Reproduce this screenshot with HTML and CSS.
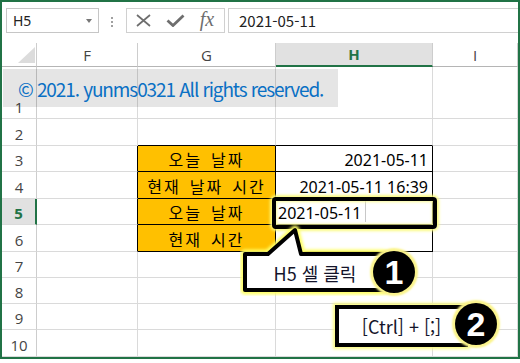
FILE: index.html
```html
<!DOCTYPE html>
<html lang="ko">
<head>
    <meta charset="UTF-8">
    <meta name="viewport" content="width=device-width, initial-scale=1.0">
    <title>오늘 날짜 입력</title>
    <link rel="stylesheet" href="styles.css">
</head>
<body>
    <div class="screen">
        <div class="window">
            <div class="formula-bar">
                <div class="name-box"><span>H5</span><i class="caret"></i></div>
                <div class="grip"><i></i><i></i><i></i></div>
                <div class="fx-buttons">
                    <span class="fx-slot">
                        <svg width="15" height="13" viewBox="0 0 15 13"><path d="M1 1L14 12M14 1L1 12" stroke="#6e6e6e" stroke-width="1.7" fill="none"/></svg>
                    </span>
                    <span class="fx-slot">
                        <svg width="19" height="13" viewBox="0 0 19 13"><path d="M1.5 6.5L7 11.5L17.5 1.5" stroke="#6e6e6e" stroke-width="2.8" fill="none"/></svg>
                    </span>
                    <span class="fx-slot fx">fx</span>
                </div>
                <div class="formula-input">2021-05-11</div>
            </div>

            <div class="sheet">
                <div class="ch corner"><svg width="17" height="16" viewBox="0 0 17 16"><path d="M17 0V16H0Z" fill="#dcdcdc"/></svg></div>
                <div class="ch">F</div>
                <div class="ch">G</div>
                <div class="ch sel">H</div>
                <div class="ch">I</div>

                <div class="rh">1</div>
                <div class="c"></div><div class="c"></div><div class="c"></div><div class="c"></div>

                <div class="rh">2</div>
                <div class="c"></div><div class="c top-edge"></div><div class="c top-edge"></div><div class="c"></div>

                <div class="rh">3</div>
                <div class="c left-edge"></div>
                <div class="c lbl">오늘 날짜</div>
                <div class="c val">2021-05-11</div>
                <div class="c"></div>

                <div class="rh">4</div>
                <div class="c left-edge"></div>
                <div class="c lbl">현재 날짜 시간</div>
                <div class="c val">2021-05-11 16:39</div>
                <div class="c"></div>

                <div class="rh sel">5</div>
                <div class="c left-edge"></div>
                <div class="c lbl">오늘 날짜</div>
                <div class="c val edit">2021-05-11<span class="cursor"></span></div>
                <div class="c"></div>

                <div class="rh">6</div>
                <div class="c left-edge"></div>
                <div class="c lbl">현재 시간</div>
                <div class="c val"></div>
                <div class="c"></div>

                <div class="rh">7</div>
                <div class="c"></div><div class="c"></div><div class="c"></div><div class="c"></div>

                <div class="rh">8</div>
                <div class="c"></div><div class="c"></div><div class="c"></div><div class="c"></div>

                <div class="rh">9</div>
                <div class="c"></div><div class="c"></div><div class="c"></div><div class="c"></div>

                <div class="rh">10</div>
                <div class="c"></div><div class="c"></div><div class="c"></div><div class="c"></div>
            </div>
        </div>

        <!-- overlays -->
        <div class="banner">© 2021. yunms0321 All rights reserved.</div>
        <div class="focus-box"></div>

        <div class="callout callout-1">
            <svg class="callout-shape" width="150" height="74" viewBox="0 0 150 74">
                <defs>
                    <filter id="glow" x="-20%" y="-20%" width="140%" height="140%">
                        <feGaussianBlur stdDeviation="1.4"/>
                    </filter>
                </defs>
                <path d="M5 32H28L55 8L61 32H143V68H5Z" fill="none" stroke="#ffff66" stroke-width="9" stroke-linejoin="round" filter="url(#glow)"/>
                <path d="M5 32H28L55 8L61 32H143V68H5Z" fill="#fff" stroke="#000" stroke-width="4" stroke-linejoin="round"/>
            </svg>
            <span class="callout-text">H5 셀 클릭</span>
        </div>
        <div class="badge badge-1">1</div>

        <div class="callout callout-2"><span class="callout-text">[Ctrl] + [;]</span></div>
        <div class="badge badge-2">2</div>
    </div>
</body>
</html>
```

FILE: styles.css
```css
body {
    margin: 0;
    background-color: #fff;
    font-family: "Noto Sans", "Noto Sans CJK KR", sans-serif;
}
.screen {
    position: relative;
    width: 520px;
    height: 363px;
    overflow: hidden;
}
.window {
    width: 520px;
    height: 359px;
    box-sizing: border-box;
    border: 2px solid #217346;
    display: flex;
    flex-direction: column;
    background-color: #fff;
}

/* formula bar */
.formula-bar {
    height: 41px;
    flex-shrink: 0;
    box-sizing: border-box;
    padding: 6px 0 0 4px;
    display: flex;
    align-items: flex-start;
}
.name-box {
    width: 93px;
    height: 25px;
    box-sizing: border-box;
    border: 1px solid #c6c6c6;
    padding: 0 6px;
    display: flex;
    align-items: center;
    justify-content: space-between;
    font-size: 14px;
    color: #222;
}
.caret {
    width: 0;
    height: 0;
    border-left: 3.5px solid transparent;
    border-right: 3.5px solid transparent;
    border-top: 4px solid #777;
}
.grip {
    width: 3px;
    margin: 9px 12px 0 12px;
    display: flex;
    flex-direction: column;
    gap: 2px;
}
.grip i {
    width: 2px;
    height: 2px;
    background-color: #a0a0a0;
}
.fx-buttons {
    width: 99px;
    height: 25px;
    box-sizing: border-box;
    border: 1px solid #d0d0d0;
    display: flex;
}
.fx-slot {
    width: 32px;
    display: flex;
    align-items: center;
    justify-content: center;
}
.fx {
    font-family: "Liberation Serif", serif;
    font-style: italic;
    font-size: 20px;
    color: #6e6e6e;
    padding-bottom: 2px;
}
.formula-input {
    flex: 1;
    height: 25px;
    margin-left: 3px;
    box-sizing: border-box;
    border: 1px solid #d0d0d0;
    border-right: none;
    padding-left: 10px;
    display: flex;
    align-items: center;
    font-family: "Noto Sans CJK KR", sans-serif;
    font-size: 15px;
    color: #222;
}

/* sheet grid */
.sheet {
    flex: 1;
    display: grid;
    grid-template-columns: 35px 101px 138px 157px 1fr;
    grid-template-rows: 24px 52px 27px 26px 27px 26px 27px 26px 26px 26px 27px;
}
.c, .ch, .rh {
    box-sizing: border-box;
    border-right: 1px solid #dadada;
    border-bottom: 1px solid #dadada;
    display: flex;
    min-width: 0;
    white-space: nowrap;
}
.c {
    align-items: flex-end;
    padding: 0 4px 2px;
    font-size: 16px;
    line-height: 18px;
    color: #000;
}
.ch {
    align-items: center;
    justify-content: center;
    font-family: "Open Sans", sans-serif;
    font-size: 15px;
    color: #444;
    border-right-color: #cdcdcd;
    border-bottom-color: #b5b5b5;
}
.ch.corner {
    align-items: flex-end;
    justify-content: flex-end;
    padding: 0 1px 3px 0;
}
.ch.sel {
    background-color: #e1e1e1;
    color: #217346;
    font-weight: 700;
    border-bottom: 2px solid #217346;
}
.rh {
    align-items: flex-end;
    justify-content: center;
    padding-bottom: 2px;
    font-family: "Open Sans", sans-serif;
    font-size: 15px;
    line-height: 18px;
    color: #444;
    border-right-color: #cdcdcd;
}
.rh.sel {
    background-color: #e1e1e1;
    color: #217346;
    font-weight: 700;
    border-right: 2px solid #217346;
}

/* the small table */
.top-edge {
    border-bottom-color: #000;
}
.left-edge {
    border-right-color: #000;
}
.lbl {
    background-color: #ffc000;
    justify-content: center;
    letter-spacing: 2px;
    word-spacing: 3px;
    border-right-color: #000;
    border-bottom-color: #000;
}
.val {
    justify-content: flex-end;
    border-right-color: #000;
    border-bottom-color: #000;
}
.val.edit {
    justify-content: flex-start;
    padding-left: 2px;
}
.cursor {
    width: 1px;
    height: 21px;
    margin-left: 3px;
    background-color: #c8c8c8;
}

/* overlays */
.banner {
    position: absolute;
    left: 3px;
    top: 69px;
    width: 335px;
    height: 38px;
    box-sizing: border-box;
    padding-left: 15px;
    background-color: rgba(0, 0, 0, 0.1);
    display: flex;
    align-items: center;
    font-family: "Noto Sans CJK KR", sans-serif;
    font-size: 19px;
    letter-spacing: -1.1px;
    color: #0a70c4;
    white-space: nowrap;
}
.focus-box {
    position: absolute;
    left: 272px;
    top: 197px;
    width: 165px;
    height: 32px;
    box-sizing: border-box;
    border: 4px solid #000;
    border-radius: 4px;
    box-shadow: 0 0 3px 2px #fbfb80, inset 0 0 3px 1px #fbfb9a;
}
.callout {
    position: absolute;
    display: flex;
    align-items: center;
    justify-content: center;
}
.callout-text {
    position: relative;
    font-family: "Noto Sans CJK KR", sans-serif;
    font-size: 18px;
    color: #14142a;
    white-space: nowrap;
}
.callout-1 {
    left: 240px;
    top: 222px;
    width: 150px;
    height: 74px;
    padding-top: 28px;
    box-sizing: border-box;
}
.callout-shape {
    position: absolute;
    left: 0;
    top: 0;
}
.callout-2 {
    left: 335px;
    top: 305px;
    width: 133px;
    height: 42px;
    box-sizing: border-box;
    border: 4px solid #000;
    background-color: #fff;
    box-shadow: 0 0 3px 2px #fbfb80;
}
.badge {
    position: absolute;
    width: 42px;
    height: 42px;
    border-radius: 50%;
    background-color: #000;
    color: #fff;
    font-family: "Liberation Sans", sans-serif;
    font-weight: 700;
    font-size: 34px;
    display: flex;
    align-items: center;
    justify-content: center;
    box-shadow: 0 0 2px 3px #fbf48a;
}
.badge-1 {
    left: 373px;
    top: 251px;
}
.badge-2 {
    left: 455px;
    top: 303px;
}
```
